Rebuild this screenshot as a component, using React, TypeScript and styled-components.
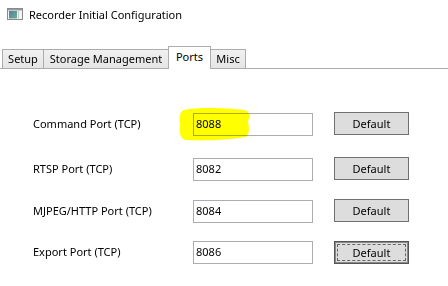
import React from "react";
import styled, { createGlobalStyle } from "styled-components";

const GlobalStyle = createGlobalStyle`
  html, body {
    margin: 0;
    padding: 0;
    background: #ffffff;
  }
  body {
    font-family: "Noto Sans", "Open Sans", "Liberation Sans", sans-serif;
    font-size: 11px;
    color: #000000;
  }
`;

const Window = styled.div`
  position: relative;
  width: 448px;
  height: 286px;
  overflow: hidden;
  background: #ffffff;
`;

const TitleBar = styled.div`
  display: flex;
  align-items: center;
  gap: 6px;
  height: 28px;
  padding-left: 7px;
`;

const TitleText = styled.span`
  font-size: 11px;
  color: #000000;
`;

const TabStrip = styled.div`
  display: flex;
  align-items: flex-end;
  height: 25px;
  margin-top: 16px;
  padding-left: 2px;
  border-bottom: 1px solid #acacac;
  box-sizing: border-box;
`;

const Tab = styled.div<{ $active?: boolean; $w: number }>`
  box-sizing: border-box;
  width: ${({ $w }) => $w}px;
  height: ${({ $active }) => ($active ? 23 : 19)}px;
  margin-bottom: ${({ $active }) => ($active ? -1 : 0)}px;
  margin-left: -1px;
  display: flex;
  align-items: center;
  justify-content: center;
  border: 1px solid #acacac;
  border-bottom: none;
  background: ${({ $active }) =>
    $active ? "#ffffff" : "linear-gradient(#f0f0f0, #e5e5e5)"};
  padding-bottom: ${({ $active }) => ($active ? 4 : 1)}px;
  position: relative;
  z-index: ${({ $active }) => ($active ? 1 : 0)};
  font-size: 11px;
  &:first-child {
    margin-left: 0;
  }
`;

const Panel = styled.div`
  display: grid;
  grid-template-columns: 139px 120px 75px;
  grid-template-rows: 45px 42px 41px 23px;
  column-gap: 21px;
  padding: 43px 0 0 33px;
`;

const Label = styled.div`
  height: 23px;
  display: flex;
  align-items: center;
  font-size: 11px;
  white-space: nowrap;
`;

const PortInput = styled.input`
  box-sizing: border-box;
  width: 120px;
  height: 23px;
  margin-top: 1px;
  padding: 0 0 3px 2px;
  border: 1px solid #abadb3;
  outline: none;
  background: #ffffff;
  font-family: inherit;
  font-size: 11px;
  color: #000000;
`;

const DefaultButton = styled.button<{ $focused?: boolean }>`
  box-sizing: border-box;
  width: 75px;
  height: 23px;
  margin-top: ${({ $focused }) => ($focused ? 1 : 0)}px;
  padding: 0;
  border: 1px solid ${({ $focused }) => ($focused ? "#555555" : "#707070")};
  box-shadow: ${({ $focused }) => ($focused ? "inset 0 0 0 1px #8a8a8a" : "none")};
  background: #dddddd;
  font-family: inherit;
  font-size: 11px;
  color: #000000;
  outline: ${({ $focused }) => ($focused ? "1px dashed #666666" : "none")};
  outline-offset: -4px;
`;

const Highlight = styled.svg`
  position: absolute;
  left: 178px;
  top: 107px;
  mix-blend-mode: multiply;
  pointer-events: none;
`;

const ports = [
  { label: "Command Port (TCP)", value: "8088" },
  { label: "RTSP Port (TCP)", value: "8082" },
  { label: "MJPEG/HTTP Port (TCP)", value: "8084" },
  { label: "Export Port (TCP)", value: "8086" },
];

function AppIcon() {
  return (
    <svg width="16" height="12" viewBox="0 0 16 12">
      <defs>
        <linearGradient id="pane" x1="0" y1="0" x2="1" y2="1">
          <stop offset="0" stopColor="#4f7fa8" />
          <stop offset="1" stopColor="#6fb08a" />
        </linearGradient>
      </defs>
      <rect x="0.5" y="0.5" width="15" height="11" fill="#f4f4f4" stroke="#8a8a8a" />
      <rect x="1" y="1" width="14" height="1.5" fill="#9a9a9a" />
      <rect x="2" y="3" width="8" height="7.5" fill="url(#pane)" />
      <rect x="11" y="3" width="1" height="7.5" fill="#c8c8c8" />
    </svg>
  );
}

export default function App() {
  return (
    <Window>
      <GlobalStyle />
      <TitleBar>
        <AppIcon />
        <TitleText>Recorder Initial Configuration</TitleText>
      </TitleBar>
      <TabStrip>
        <Tab $w={42}>Setup</Tab>
        <Tab $w={126}>Storage Management</Tab>
        <Tab $w={43} $active>
          Ports
        </Tab>
        <Tab $w={36}>Misc</Tab>
      </TabStrip>
      <Panel>
        {ports.map((p, i) => (
          <React.Fragment key={p.label}>
            <Label>{p.label}</Label>
            <PortInput readOnly defaultValue={p.value} />
            <DefaultButton $focused={i === ports.length - 1}>Default</DefaultButton>
          </React.Fragment>
        ))}
      </Panel>
      <Highlight width="74" height="36" viewBox="0 0 74 36">
        <path
          d="M6 3 C20 0 48 1 66 3 C72 4 72 10 70 14 C71 20 72 27 68 30 C50 33 25 34 8 33 C2 32 1 25 2 18 C1 11 1 5 6 3 Z"
          fill="#ffff00"
        />
      </Highlight>
    </Window>
  );
}
